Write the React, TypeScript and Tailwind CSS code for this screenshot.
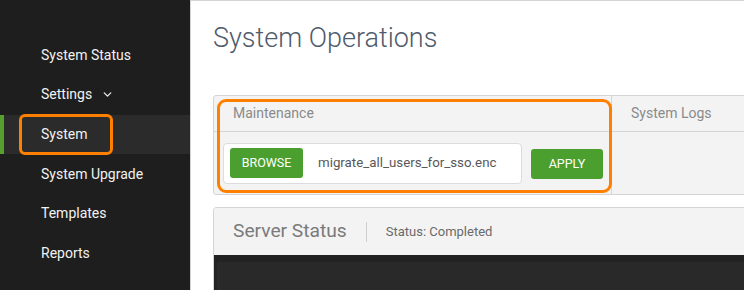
import React from "react";
import { ChevronDown } from "lucide-react";

const font = { fontFamily: "Roboto, 'Liberation Sans', sans-serif" };

function NavItem({ label, active, chevron }: { label: string; active?: boolean; chevron?: boolean }) {
  return (
    <div className={`relative flex h-[39.6px] items-center pl-[41px] text-[14px] text-[#f2f2f2] ${active ? "bg-[#2b2b2b]" : ""}`}>
      {active && <div className="absolute left-0 top-0 h-full w-[4px] bg-[#55a02e]" />}
      {active && (
        <div className="absolute left-[19px] top-[-1px] h-[41px] w-[94px] rounded-[6px] border-[3px] border-[#ff8000]" />
      )}
      <span className="relative">{label}</span>
      {chevron && <ChevronDown size={13} strokeWidth={2.5} className="ml-[9px] text-[#e8e8e8]" />}
    </div>
  );
}

export default function App() {
  return (
    <div className="flex h-[290px] w-[744px] overflow-hidden bg-white" style={font}>
      <aside className="h-full w-[190px] shrink-0 bg-[#1e1e1e] pt-[35.5px]">
        <NavItem label="System Status" />
        <NavItem label="Settings" chevron />
        <NavItem label="System" active />
        <NavItem label="System Upgrade" />
        <NavItem label="Templates" />
        <NavItem label="Reports" />
      </aside>
      <main className="min-w-0 flex-1 border-t border-l border-[#d4d4d4] pl-[22px]">
        <h1 className="mt-[22px] h-[31px] text-[27px] font-light leading-[31px] text-[#4f5b6b]">System Operations</h1>
        <section className="relative mt-[41px] w-[560px] rounded-[3px] border border-[#d5d5d5] bg-[#f3f3f3]">
          <div className="grid grid-cols-[398px_1fr]">
            <div className="flex h-[36px] items-center border-b border-r border-[#d5d5d5] pl-[19px] text-[14px] text-[#8a8a8a]">
              Maintenance
            </div>
            <div className="flex h-[36px] items-center border-b border-[#d5d5d5] pl-[19px] text-[14px] text-[#8a8a8a]">
              System Logs
            </div>
            <div className="flex h-[62px] items-center gap-[9px] border-r border-[#d5d5d5] pl-[9px]">
              <div className="flex h-[41px] w-[299px] items-center rounded-[4px] border border-[#dcdcdc] bg-white pl-[6px]">
                <button className="h-[30px] w-[73px] rounded-[3px] bg-[#4a9f2e] text-[12.5px] text-white">BROWSE</button>
                <span className="ml-[15px] text-[13.3px] text-[#585858]">migrate_all_users_for_sso.enc</span>
              </div>
              <button className="mt-[2px] h-[30px] w-[72px] rounded-[3px] bg-[#4a9f2e] text-[12.5px] text-white">APPLY</button>
            </div>
            <div className="h-[62px]" />
          </div>
          <div className="pointer-events-none absolute left-[3px] top-[3px] h-[94px] w-[395px] rounded-[9px] border-[3px] border-[#ff8000]" />
        </section>
        <section className="mt-[12px] w-[560px] overflow-hidden rounded-t-[4px] border border-b-0 border-[#d5d5d5]">
          <div className="flex h-[47px] items-center bg-[#f3f3f3] pl-[19px]">
            <span className="text-[19.2px] text-[#7a7a7a]">Server Status</span>
            <div className="ml-[19px] h-[20px] w-px bg-[#cfcfcf]" />
            <span className="ml-[19px] text-[13px] text-[#6a6a6a]">Status: Completed</span>
          </div>
          <div className="h-[40px] bg-[#222222] pl-[3px] pt-[7px]">
            <div className="h-full bg-[#292929]" />
          </div>
        </section>
      </main>
    </div>
  );
}
